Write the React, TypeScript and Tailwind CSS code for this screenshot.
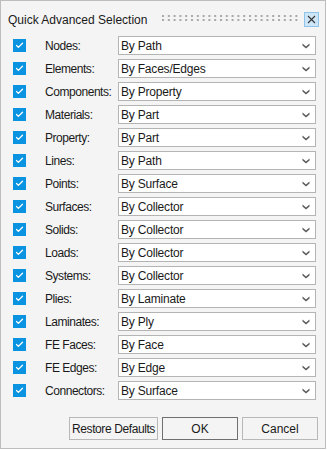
import { Check } from "lucide-react"

const rows: [string, string][] = [
  ["Nodes:", "By Path"],
  ["Elements:", "By Faces/Edges"],
  ["Components:", "By Property"],
  ["Materials:", "By Part"],
  ["Property:", "By Part"],
  ["Lines:", "By Path"],
  ["Points:", "By Surface"],
  ["Surfaces:", "By Collector"],
  ["Solids:", "By Collector"],
  ["Loads:", "By Collector"],
  ["Systems:", "By Collector"],
  ["Plies:", "By Laminate"],
  ["Laminates:", "By Ply"],
  ["FE Faces:", "By Face"],
  ["FE Edges:", "By Edge"],
  ["Connectors:", "By Surface"],
]

const Chevron = () => (
  <svg width="8" height="6" viewBox="0 0 8 6" className="shrink-0">
    <path d="M0.5 0.5 L4 3.5 L7.5 0.5 L7.5 2.5 L4 5.5 L0.5 2.5 Z" fill="#5a5a5a" />
  </svg>
)

const Grip = () => (
  <svg width="136" height="8" className="shrink-0">
    <defs>
      <pattern id="dots" width="5.8" height="4" patternUnits="userSpaceOnUse">
        <rect x="0" y="0" width="2" height="2" fill="#a8a8a8" />
      </pattern>
    </defs>
    <rect width="136" height="8" fill="url(#dots)" />
  </svg>
)

const Row = ({ label, value }: { label: string; value: string }) => (
  <div className="flex items-center h-[19px]">
    <div className="w-[13px] h-[13px] ml-[12px] bg-[#0a93e0] flex items-center justify-center">
      <Check className="w-[9px] h-[9px] text-white" strokeWidth={3.5} />
    </div>
    <span className="ml-[19px] w-[73px] text-[12px] tracking-[-0.45px] whitespace-nowrap text-[#1a1a1a]">{label}</span>
    <div className="w-[198px] h-[19px] bg-white border border-[#b4b4b4] flex items-center justify-between pl-[2px] pr-[5px]">
      <span className="text-[12px] tracking-[-0.2px] text-[#1a1a1a]">{value}</span>
      <Chevron />
    </div>
  </div>
)

export default function App() {
  return (
    <div
      className="w-[326px] h-[449px] bg-[#f4f4f4] border border-[#bdbdbd] flex flex-col"
      style={{ fontFamily: '"Liberation Sans", Arial, sans-serif' }}
    >
      <div className="flex items-center h-[35px] pl-[7px] pr-[6px] pt-[3px]">
        <span className="text-[12px] text-[#1a1a1a]">Quick Advanced Selection</span>
        <div className="ml-auto flex items-center gap-[6px] -mt-[2px]">
          <Grip />
          <div className="w-[15px] h-[15px] bg-[#cde6f7] border border-[#8fc4ea] flex items-center justify-center">
            <svg width="9" height="9" viewBox="0 0 9 9">
              <path d="M1 1 L8 8 M8 1 L1 8" stroke="#333" strokeWidth="1.1" />
            </svg>
          </div>
        </div>
      </div>
      <div className="flex flex-col gap-[4px]">
        {rows.map(([l, v]) => (
          <Row key={l} label={l} value={v} />
        ))}
      </div>
      <div className="flex justify-end gap-[4px] mt-auto mb-[8px] pr-[7px]">
        <button className="w-[89px] h-[23px] bg-[#f4f4f4] border border-[#b8b8b8] text-[12px] tracking-[-0.4px] whitespace-nowrap text-[#1a1a1a]">
          Restore Defaults
        </button>
        <button className="w-[76px] h-[23px] bg-[#f4f4f4] border border-[#6f6f6f] text-[12px] text-[#1a1a1a]">
          OK
        </button>
        <button className="w-[76px] h-[23px] bg-[#f4f4f4] border border-[#b8b8b8] text-[12px] text-[#1a1a1a]">
          Cancel
        </button>
      </div>
    </div>
  )
}
